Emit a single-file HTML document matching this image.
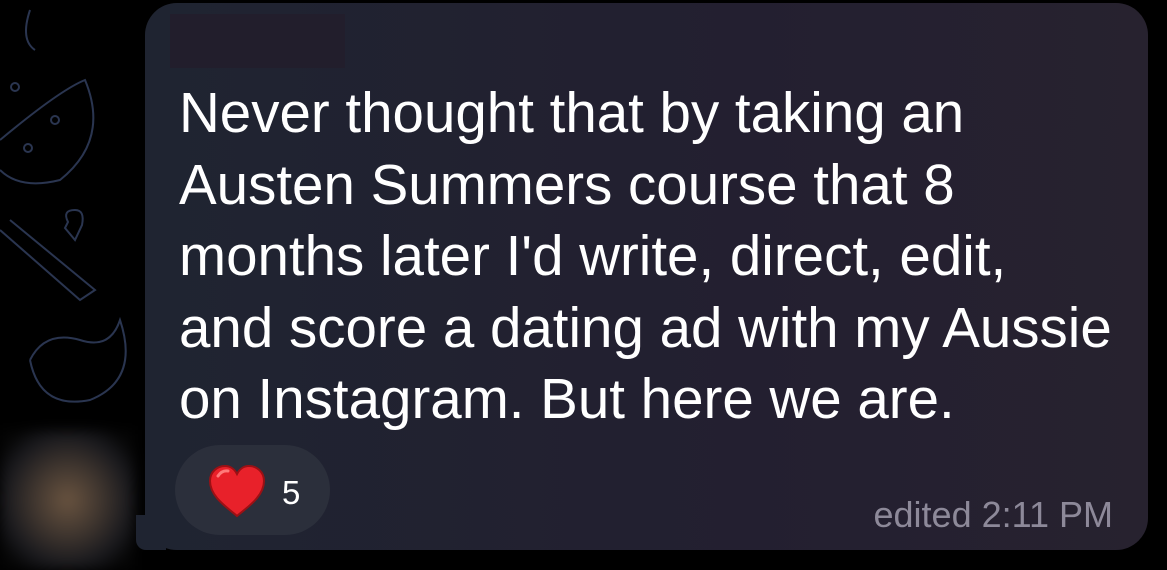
<!DOCTYPE html>
<html><head><meta charset="utf-8"><style>
html,body{margin:0;padding:0;width:1167px;height:570px;overflow:hidden;background:#000;font-family:"Liberation Sans",sans-serif;}
.bubble{position:absolute;left:145px;top:3px;width:1003px;height:547px;border-radius:32px;background:linear-gradient(90deg,#1f2431 0%,#231f30 60%,#27222f 100%);}
.tail{position:absolute;left:136px;top:515px;width:30px;height:35px;background:#1f2431;border-bottom-left-radius:10px;}
.redact{position:absolute;left:170px;top:14px;width:175px;height:54px;background:#221e2c;}
.txt{position:absolute;left:179px;top:77px;color:#fff;font-size:56.5px;line-height:71.5px;white-space:nowrap;}
.pill{position:absolute;left:175px;top:445px;width:155px;height:90px;border-radius:45px;background:#2b2f3b;}
.cnt{position:absolute;left:282px;top:474px;color:#fff;font-size:33px;}
.time{position:absolute;right:54px;top:494px;color:#8d8999;font-size:36px;}
.avatar{position:absolute;left:0;top:430px;width:135px;height:140px;background:radial-gradient(ellipse at 50% 50%,#6a5440 0%,#40362f 35%,#1a1a1e 65%,#050505 85%);filter:blur(6px);}
</style></head><body>
<svg width="145" height="430" style="position:absolute;left:0;top:0" fill="none" stroke="#2a3550" stroke-width="2">
<path d="M0 140 Q60 90 85 80 Q110 140 60 180 Q20 190 0 170"/>
<circle cx="15" cy="87" r="4"/><circle cx="55" cy="120" r="4"/><circle cx="28" cy="148" r="4"/>
<path d="M68 222 Q62 210 75 210 Q85 210 82 225 L75 240 L65 228Z"/>
<path d="M0 230 L80 300 L95 290 L10 220"/>
<path d="M30 360 Q45 330 80 340 Q110 350 120 320 Q140 380 90 400 Q40 410 30 360"/>
<path d="M30 10 Q20 40 35 50"/>
</svg>
<div class="avatar"></div>
<div class="tail"></div>
<div class="bubble"></div>
<div class="redact"></div>
<div class="txt">Never thought that by taking an<br>Austen Summers course that 8<br>months later I'd write, direct, edit,<br>and score a dating ad with my Aussie<br>on Instagram. But here we are.</div>
<div class="pill"></div>
<svg style="position:absolute;left:208px;top:464px" width="58" height="54" viewBox="0 0 58 54">
<path d="M29 52 C20 44 2 33 2 17 C2 8 9 2 17 2 C23 2 27 6 29 10 C31 6 35 2 41 2 C49 2 56 8 56 17 C56 33 38 44 29 52Z" fill="#e8212a" stroke="#9c1014" stroke-width="2"/>
<path d="M10 12 Q14 6 20 7" stroke="#ff7a7a" stroke-width="3" fill="none" stroke-linecap="round"/>
</svg>
<div class="cnt">5</div>
<div class="time">edited 2:11 PM</div>
</body></html>
